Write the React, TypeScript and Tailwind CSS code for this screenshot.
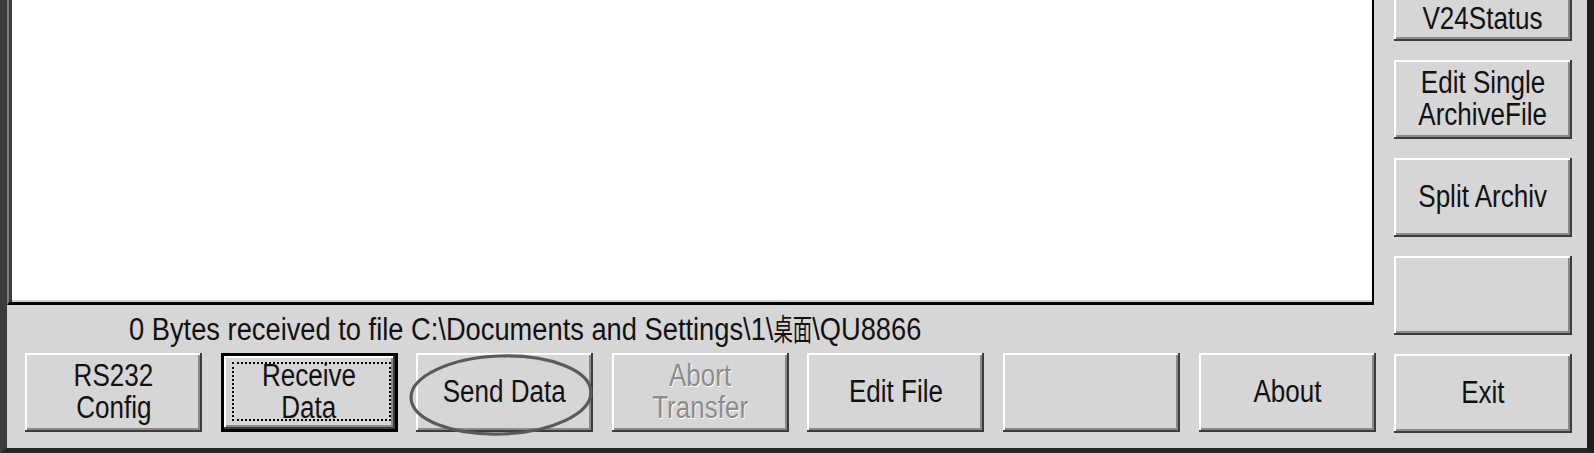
import React from "react";

type BtnProps = {
  lines: string[];
  disabled?: boolean;
  isDefault?: boolean;
  circled?: boolean;
  className?: string;
};

function Btn({ lines, disabled, isDefault, circled, className }: BtnProps) {
  return (
    <div
      className={
        "relative shrink-0 w-[177px] h-[79px] bg-[#d6d6d6] flex flex-col items-center " +
        (isDefault
          ? "border-[3px] border-black shadow-[inset_-2px_-2px_0_#3c3c3c,inset_2px_2px_0_#ffffff,inset_-4px_-4px_0_#8a8a8a] "
          : "shadow-[inset_-2px_-2px_0_#3c3c3c,inset_2px_2px_0_#ffffff,inset_-4px_-4px_0_#8a8a8a] ") +
        (className ?? "justify-center pb-[2px]")
      }
    >
      {lines.map((l, i) => (
        <span
          key={i}
          className={
            "inline-block whitespace-nowrap text-[31px] leading-[32px] scale-x-[0.84] " +
            (disabled ? "text-[#8c8c8c] [text-shadow:1px_1px_0_#ffffff]" : "text-[#111111]")
          }
        >
          {l || "\u00a0"}
        </span>
      ))}
      {isDefault && (
        <span className="absolute left-[8px] right-[4px] top-[6px] bottom-[8px] border-2 border-dotted border-black" />
      )}
      {circled && (
        <svg
          className="absolute left-[-8px] top-[0px] w-[186px] h-[84px] overflow-visible pointer-events-none"
          viewBox="0 0 186 84"
        >
          <ellipse
            cx="93"
            cy="42"
            rx="90"
            ry="39"
            fill="none"
            stroke="#5a5a5a"
            strokeWidth="3.2"
            transform="rotate(-2 93 42)"
          />
        </svg>
      )}
    </div>
  );
}

export default function App() {
  return (
    <div className="w-[1594px] h-[453px] overflow-hidden flex bg-[#d6d6d6] border-l-[7px] border-l-[#3c3c3c] border-r-[7px] border-r-[#1e1e1e] border-b-[5px] border-b-[#262626] font-['Liberation_Sans',sans-serif] text-black">
      {/* left column */}
      <div className="w-[1369px] shrink-0 flex flex-col">
        <div className="h-[305px] mr-[2px] bg-white border-l-2 border-l-[#7c7c7c] border-r-2 border-r-black border-b-[3px] border-b-black shadow-[inset_3px_0_0_#3c3c3c,inset_0_-2px_0_#cfcfcf]" />
        <div className="h-[48px] pt-[9px] pl-[122px] whitespace-nowrap">
          <span className="inline-block origin-left scale-x-[0.88] text-[31px] leading-[31px] text-[#111111]">
            0 Bytes received to file C:\Documents and Settings\1\
            <span className="inline-block text-[22px] scale-y-[1.35] -translate-y-[3px] font-['Noto_Sans_CJK_SC',sans-serif]">
              桌面
            </span>
            \QU8866
          </span>
        </div>
        <div className="flex gap-[18.6px] pl-[18px]">
          <Btn lines={["RS232", "Config"]} />
          <Btn lines={["Receive", "Data"]} isDefault />
          <Btn lines={["Send Data"]} circled />
          <Btn lines={["Abort", "Transfer"]} disabled />
          <Btn lines={["Edit File"]} />
          <Btn lines={[""]} />
          <Btn lines={["About"]} />
        </div>
      </div>
      {/* right column */}
      <div className="ml-[18px] w-[178px] shrink-0 flex flex-col gap-[19px] mt-[-38px]">
        <Btn lines={["V24Status"]} className="w-[178px] justify-end pb-[6px]" />
        <Btn lines={["Edit Single", "ArchiveFile"]} className="w-[178px] justify-center pb-[2px]" />
        <Btn lines={["Split Archiv"]} className="w-[178px] justify-center pb-[2px]" />
        <Btn lines={[""]} className="w-[178px] justify-center pb-[2px]" />
        <Btn lines={["Exit"]} className="w-[178px] justify-center pb-[2px]" />
      </div>
    </div>
  );
}
